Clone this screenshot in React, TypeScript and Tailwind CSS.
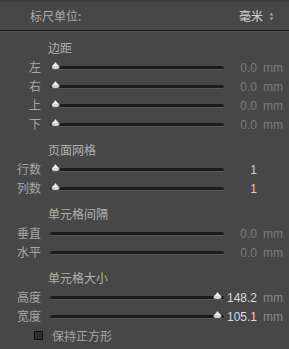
import React from "react";

type Row = { label: string; value?: string; unit?: string; pos?: number; bright?: boolean };

const sections: { title: string; rows: Row[] }[] = [
  {
    title: "边距",
    rows: [
      { label: "左", value: "0.0", unit: "mm", pos: 0 },
      { label: "右", value: "0.0", unit: "mm", pos: 0 },
      { label: "上", value: "0.0", unit: "mm", pos: 0 },
      { label: "下", value: "0.0", unit: "mm", pos: 0 },
    ],
  },
  {
    title: "页面网格",
    rows: [
      { label: "行数", value: "1", pos: 0, bright: true },
      { label: "列数", value: "1", pos: 0, bright: true },
    ],
  },
  {
    title: "单元格间隔",
    rows: [
      { label: "垂直", value: "0.0", unit: "mm" },
      { label: "水平", value: "0.0", unit: "mm" },
    ],
  },
  {
    title: "单元格大小",
    rows: [
      { label: "高度", value: "148.2", unit: "mm", pos: 1, bright: true },
      { label: "宽度", value: "105.1", unit: "mm", pos: 1, bright: true },
    ],
  },
];

const Thumb = () => (
  <svg width="11" height="9" viewBox="0 0 11 9" className="block">
    <path d="M5.5 0.5 Q7 3 9.5 5 Q10.5 8.5 5.5 8.5 Q0.5 8.5 1.5 5 Q4 3 5.5 0.5 Z" fill="#d4d4d4" stroke="#2a2a2a" strokeWidth="0.6" />
    <path d="M5.5 1.8 Q6.5 3.6 8.3 5 L2.7 5 Q4.5 3.6 5.5 1.8 Z" fill="#f6f6f6" />
  </svg>
);

const Slider = ({ pos }: { pos?: number }) => (
  <div className="relative h-[9px] w-[174px] flex items-center">
    <div className="h-[4px] w-full rounded-full bg-[#1c1c1c] border-b border-[#5a5a5a]" />
    {pos !== undefined && (
      <div className={`absolute top-[-2px] ${pos === 1 ? "right-[1px]" : "left-[0px]"}`}>
        <Thumb />
      </div>
    )}
  </div>
);

export default function App() {
  return (
    <div
      className="w-[289px] h-[349px] bg-[#474747] text-[12px] overflow-hidden"
      style={{ fontFamily: '"Noto Sans CJK SC", "Noto Sans", sans-serif' }}
    >
      <div className="h-[30px] border-t-2 border-[#3b3b3b] flex items-center justify-between pl-[30px] pr-[15px]">
        <span className="text-[#ababab] text-[12px]">标尺单位:</span>
        <span className="flex items-center gap-[6px] text-[#d4d4d4] text-[12px]">
          毫米
          <svg width="5" height="9" viewBox="0 0 5 9">
            <path d="M2.5 0.5 L4.5 3.5 L0.5 3.5 Z M2.5 8.5 L4.5 5.5 L0.5 5.5 Z" fill="#a0a0a0" />
          </svg>
        </span>
      </div>
      <div className="h-[2px] bg-[#161616] border-b border-[#535353]" />
      <div className="pt-[6px]">
        {sections.map((s, i) => (
          <div key={s.title} className={i === 0 ? "" : "mt-[6px]"}>
            <div className="h-[20px] flex items-center pl-[48px] text-[#b2b2b2] text-[12px]">{s.title}</div>
            {s.rows.map((r) => (
              <div key={r.label} className="h-[19px] flex items-center">
                <div className="w-[41px] h-[19px] flex items-center justify-end text-[#a6a6a6] text-[12px] mt-[-2px]">
                  {r.label}
                </div>
                <div className="ml-[9px]">
                  <Slider pos={r.pos} />
                </div>
                <div
                  className="flex-1 flex items-baseline justify-end pr-[6px] text-[12px]"
                  style={{ fontFamily: '"Liberation Sans", sans-serif' }}
                >
                  <span className={r.bright ? (r.unit ? "text-[#dcdcdc]" : "text-[#c6ced6]") : "text-[#7c7c7c]"}>
                    {r.value}
                  </span>
                  <span className={`inline-block w-[26px] text-right ${r.bright ? "text-[#8a8a8a]" : "text-[#7c7c7c]"}`}>
                    {r.unit ?? ""}
                  </span>
                </div>
              </div>
            ))}
          </div>
        ))}
        <div className="h-[19px] flex items-center pl-[34px] gap-[9px]">
          <div className="w-[9px] h-[9px] border border-[#111] bg-[#2e2e2e]" />
          <span className="text-[#a6a6a6] text-[12px]">保持正方形</span>
        </div>
      </div>
    </div>
  );
}
